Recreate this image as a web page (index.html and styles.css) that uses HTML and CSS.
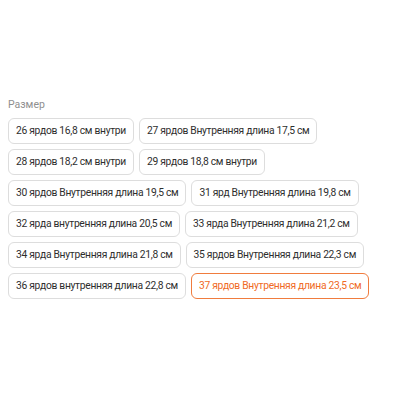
FILE: index.html
```
<!DOCTYPE html>
<html>
<head>
<meta charset="utf-8">
<link rel="stylesheet" href="styles.css">
</head>
<body>
<div class="page">
  <div class="label">Размер</div>
  <div class="options">
    <button class="opt">26 ярдов 16,8 см внутри</button>
    <button class="opt">27 ярдов Внутренняя длина 17,5 см</button>
    <button class="opt">28 ярдов 18,2 см внутри</button>
    <button class="opt">29 ярдов 18,8 см внутри</button>
    <button class="opt">30 ярдов Внутренняя длина 19,5 см</button>
    <button class="opt">31 ярд Внутренняя длина 19,8 см</button>
    <button class="opt">32 ярда внутренняя длина 20,5 см</button>
    <button class="opt">33 ярда Внутренняя длина 21,2 см</button>
    <button class="opt">34 ярда Внутренняя длина 21,8 см</button>
    <button class="opt">35 ярдов Внутренняя длина 22,3 см</button>
    <button class="opt">36 ярдов внутренняя длина 22,8 см</button>
    <button class="opt selected">37 ярдов Внутренняя длина 23,5 см</button>
  </div>
</div>
</body>
</html>
```
FILE: styles.css
```
html, body {
  margin: 0;
  padding: 0;
  background: #ffffff;
}
body {
  font-family: "Roboto", "Liberation Sans", sans-serif;
}
.page {
  padding: 97px 8px 0 8px;
}
.label {
  font-size: 10.5px;
  color: #8f8f8f;
  line-height: 15px;
  margin-bottom: 6px;
}
.options {
  display: flex;
  flex-wrap: wrap;
  gap: 5px 5px;
  width: 380px;
}
.opt {
  font-family: inherit;
  font-size: 10.3px;
  letter-spacing: -0.3px;
  color: #2e2e2e;
  background: #ffffff;
  border: 1px solid #dddddd;
  border-radius: 6px;
  height: 26px;
  padding: 0 7px;
  line-height: 24px;
  white-space: nowrap;
}
.opt.selected {
  border-color: #f07c3e;
  color: #f06a25;
}
```
